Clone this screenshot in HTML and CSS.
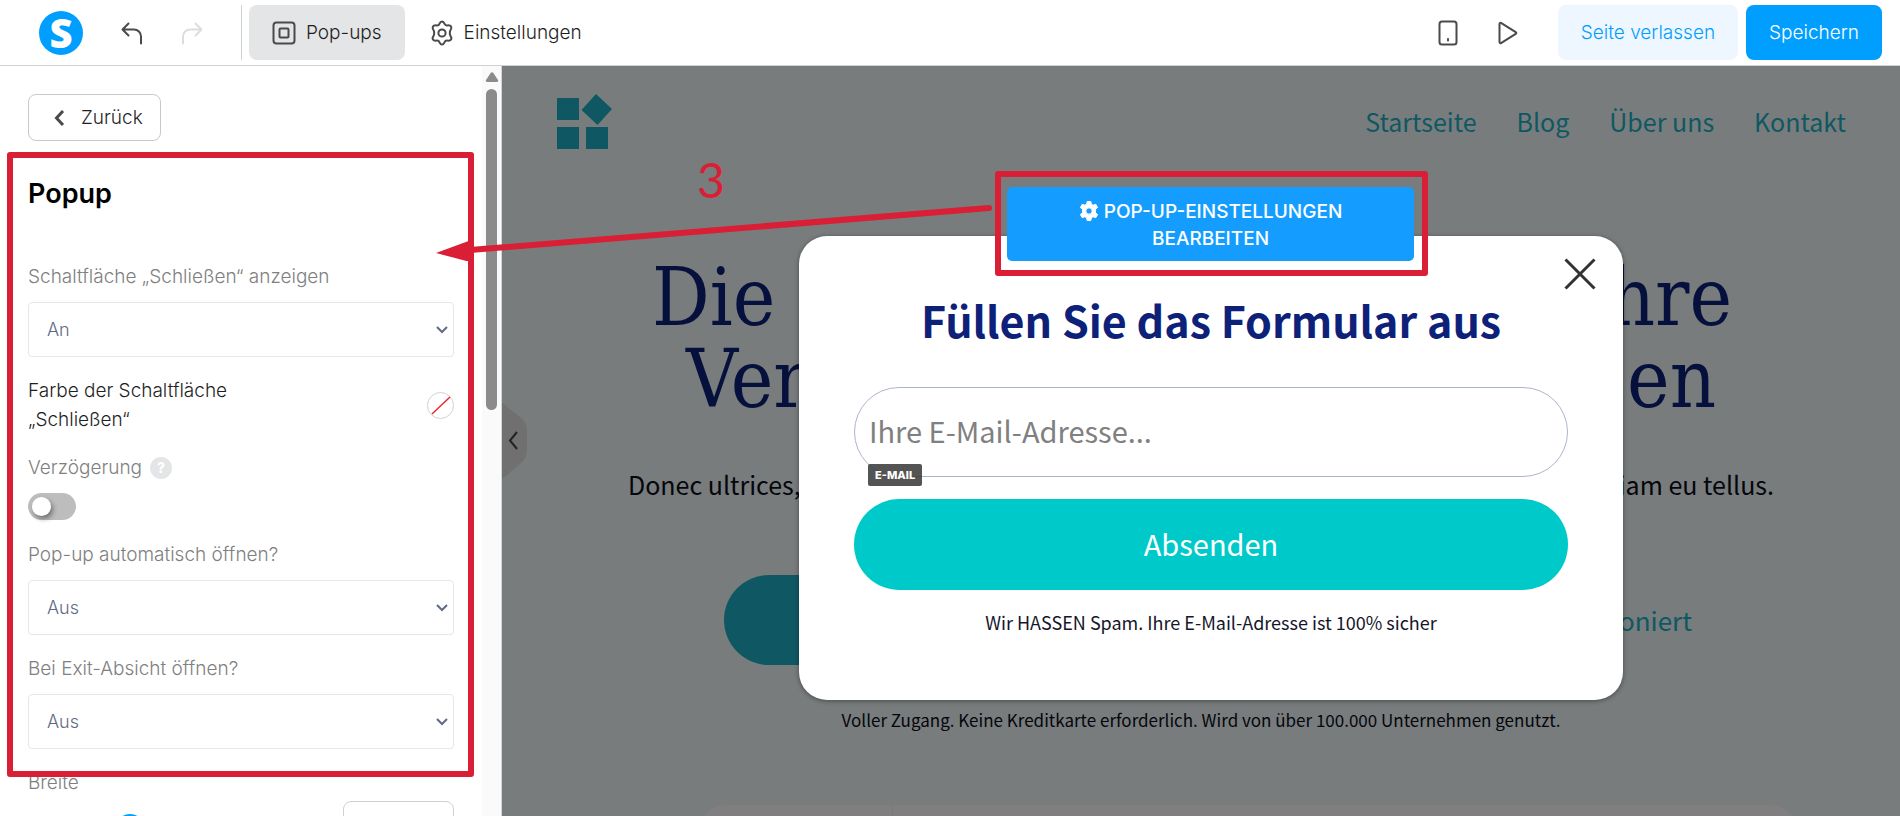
FILE: index.html
```
<!DOCTYPE html>
<html lang="de">
<head>
<meta charset="utf-8">
<meta name="viewport" content="width=device-width, initial-scale=1">
<title>Pop-up Editor</title>
<link rel="stylesheet" href="styles.css">
</head>
<body class="app">
<header class="topbar">
  <div class="topbar-left">
    <span class="brand" aria-label="Logo">S</span>
    <button class="icon-btn" type="button" aria-label="Rückgängig">
      <svg width="22" height="24" viewBox="0 0 22 24"><path d="M7.500 2.500 1.500 8.500l6 6M2 8.500h11a7 7 0 0 1 7 7v7"/></svg>
    </button>
    <button class="icon-btn icon-btn-off" type="button" aria-label="Wiederholen">
      <svg width="22" height="24" viewBox="0 0 22 24"><path d="M14.500 2.500l6 6-6 6M20 8.500H9a7 7 0 0 0-7 7v7"/></svg>
    </button>
  </div>
  <nav class="tabs">
    <button class="tab tab-active" type="button">
      <svg width="24" height="24" viewBox="0 0 24 24"><rect x="1.500" y="1.500" width="21" height="21" rx="3"/><rect x="7.500" y="7.500" width="9" height="9" rx="1"/></svg>
      Pop-ups
    </button>
    <button class="tab" type="button">
      <svg width="24" height="26" viewBox="0 0 24 26"><circle cx="12" cy="13" r="3.600"/><path d="M12 1.500c1.700 0 2 1 2.600 2.400.5 1.200 1.500 1.700 2.800 1.500 1.600-.2 2.800-.3 3.700 1.200.9 1.500.2 2.400-.7 3.700-.8 1.100-.8 4.300 0 5.400.9 1.300 1.600 2.200.7 3.700-.9 1.500-2.100 1.400-3.700 1.200-1.300-.2-2.300.3-2.800 1.500-.6 1.400-.9 2.400-2.600 2.400s-2-1-2.600-2.400c-.5-1.200-1.500-1.700-2.800-1.500-1.600.2-2.800.3-3.700-1.200-.9-1.500-.2-2.400.7-3.700.8-1.100.8-4.300 0-5.400-.9-1.300-1.600-2.200-.7-3.700.9-1.500 2.100-1.400 3.700-1.200 1.300.2 2.300-.3 2.800-1.500C10 2.500 10.300 1.500 12 1.500z"/></svg>
      Einstellungen
    </button>
  </nav>
  <div class="topbar-right">
    <button class="icon-btn" type="button" aria-label="Mobile Ansicht">
      <svg width="20" height="26" viewBox="0 0 20 26"><rect x="1.500" y="1.500" width="17" height="23" rx="2.500"/><path d="M10 19v1.500"/></svg>
    </button>
    <button class="icon-btn" type="button" aria-label="Vorschau">
      <svg width="20" height="24" viewBox="0 0 20 24"><path d="M1.500 3v18c0 1.200 1 1.600 1.900.9l14.300-9c.8-.5.8-1.300 0-1.800l-14.300-9C2.500 1.400 1.500 1.800 1.500 3z"/></svg>
    </button>
    <div class="topbar-actions">
      <button class="btn btn-soft" type="button">Seite verlassen</button>
      <button class="btn btn-solid" type="button">Speichern</button>
    </div>
  </div>
</header>

<div class="workspace">
  <aside class="sidebar">
    <div class="panel">
      <button class="back" type="button">
        <svg width="11" height="18" viewBox="0 0 11 18"><path d="M9 2 2.500 9 9 16"/></svg>
        Zurück
      </button>
      <h2 class="panel-title">Popup</h2>
      <label class="label" for="show-close">Schaltfläche „Schließen“ anzeigen</label>
      <select class="select" id="show-close"><option>An</option><option>Aus</option></select>
      <div class="color-row">
        <span class="color-label">Farbe der Schaltfläche „Schließen“</span>
        <button class="swatch" type="button" aria-label="Farbe wählen">
          <svg width="25" height="25" viewBox="0 0 25 25"><path d="M4 21 22 4"/></svg>
        </button>
      </div>
      <div class="label label-help"><label for="delay">Verzögerung</label><span class="help">?</span></div>
      <input class="toggle" id="delay" type="checkbox">
      <label class="label" for="auto-open">Pop-up automatisch öffnen?</label>
      <select class="select" id="auto-open"><option>Aus</option><option>An</option></select>
      <label class="label" for="exit-open">Bei Exit-Absicht öffnen?</label>
      <select class="select" id="exit-open"><option>Aus</option><option>An</option></select>
      <label class="label label-width" for="width">Breite</label>
      <div class="width-row">
        <input class="range" type="range" min="0" max="100" value="34" aria-label="Breite">
        <input class="number" id="width" type="text">
      </div>
    </div>
    <div class="scrollbar">
      <svg class="scroll-arrow" width="14" height="10" viewBox="0 0 14 10"><path d="M5.800.8 1 8c-.5 1 0 2 1 2h10c1 0 1.500-1 1-2L8.200.8c-.6-.9-1.800-.9-2.400 0z"/></svg>
      <span class="scroll-thumb"></span>
    </div>
    <div class="mark mark-panel"></div>
  </aside>

  <main class="canvas">
    <div class="site">
      <header class="site-header">
        <svg class="site-logo" width="56" height="56" viewBox="0 0 56 56"><path d="M0 4h22v22H0zM0 33h22v22H0zM29 33h22v22H29zM39 0l16 15-14.500 16L24.500 16z"/></svg>
        <nav class="site-nav">
          <a href="#">Startseite</a><a href="#">Blog</a><a href="#">Über uns</a><a href="#">Kontakt</a>
        </nav>
      </header>
      <section class="hero">
        <h1 class="hero-title">
          <span class="hero-line hero-line-a"><span>Die</span><span>Ihre</span></span>
          <span class="hero-line hero-line-b"><span>Ver</span><span>en</span></span>
        </h1>
        <p class="hero-text"><span>Donec ultrices,</span><span>iam eu tellus.</span></p>
        <div class="hero-actions">
          <a class="hero-cta" href="#" aria-label="Start"></a>
          <a class="hero-link" href="#">funktioniert</a>
        </div>
        <p class="hero-note">Voller Zugang. Keine Kreditkarte erforderlich. Wird von über 100.000 Unternehmen genutzt.</p>
      </section>
      <section class="card"><div class="card-side"></div></section>
    </div>

    <button class="handle" type="button" aria-label="Leiste einklappen">
      <svg width="26" height="76" viewBox="0 0 26 76"><path class="handle-bg" d="M0 0 19 15q6 5 6 12v20q0 7-5 12L0 76z"/><path class="handle-icon" d="M15 29 8 37.500 15 46"/></svg>
    </button>

    <div class="popup-layer">
      <form class="popup">
        <button class="close" type="button" aria-label="Schließen">
          <svg width="32" height="32" viewBox="0 0 32 32"><path d="M1.500 1.500l29 29M30.500 1.500l-29 29"/></svg>
        </button>
        <div class="mark mark-edit">
          <button class="edit" type="button">
            <svg class="edit-icon" width="20" height="20" viewBox="0 0 20 20"><path fill-rule="evenodd" d="M8.200.5h3.600l.6 2.700 1.700 1 2.700-.9 1.800 3.200-2.100 1.800v3.400l2.100 1.800-1.800 3.200-2.700-.9-1.700 1-.6 2.700H8.200l-.6-2.700-1.700-1-2.700.9-1.800-3.200 2.100-1.800V8.300L1.400 6.500l1.800-3.200 2.700.9 1.700-1zM10 6.800a3.200 3.200 0 1 0 0 6.400 3.200 3.200 0 0 0 0-6.400z"/></svg>
            POP-UP-EINSTELLUNGEN BEARBEITEN
          </button>
        </div>
        <h2 class="popup-title">Füllen Sie das Formular aus</h2>
        <div class="field">
          <input class="email" type="email" placeholder="Ihre E-Mail-Adresse..." aria-label="E-Mail">
          <span class="tag">E-MAIL</span>
        </div>
        <button class="submit" type="button">Absenden</button>
        <p class="popup-note">Wir HASSEN Spam. Ihre E-Mail-Adresse ist 100% sicher</p>
      </form>
    </div>
  </main>

  <svg class="arrow" width="560" height="60" viewBox="0 0 560 60"><path class="arrow-line" d="M553 7 34 49"/><path class="arrow-head" d="M0 52 38 38v24z"/></svg>
  <span class="step">3</span>
</div>
</body>
</html>
```
FILE: styles.css
```
:root {
  --ink: #4a4a4c;
  --blue: #009fff;
  --red: #d91e36;
  --muted: #808080;
  --site-font: "Noto Sans CJK SC", "Noto Sans", sans-serif;
}

*, *::before, *::after { box-sizing: border-box; }

button, input, select { font: inherit; margin: 0; }
button { cursor: pointer; border: 0; background: none; padding: 0; }
h1, h2, p { margin: 0; }

.app {
  margin: 0;
  height: 100vh;
  overflow: hidden;
  display: flex;
  flex-direction: column;
  background: #fff;
  color: #1f1f1f;
  font-family: Inter, sans-serif;
  font-size: 19px;
  font-weight: 300;
}

/* Top bar */
.topbar {
  flex: none;
  display: flex;
  align-items: center;
  height: 66px;
  padding-right: 18px;
  border-bottom: 1px solid #cfd1d2;
}

.topbar-left {
  display: flex;
  align-items: center;
  gap: 38px;
  padding: 0 38px 0 39px;
}

.brand {
  display: grid;
  place-items: center;
  width: 44px;
  height: 44px;
  border-radius: 50%;
  background: var(--blue);
  color: #fff;
  font: 800 40px/44px "Open Sans", sans-serif;
}

.icon-btn { display: grid; place-items: center; }

.icon-btn svg, .tab svg {
  fill: none;
  stroke: var(--ink);
  stroke-width: 2;
  stroke-linecap: round;
  stroke-linejoin: round;
}

.icon-btn-off svg { stroke: #dcdddf; }

.tabs {
  display: flex;
  gap: 2px;
  padding-left: 7px;
  border-left: 1px solid #cfd1d2;
}

.tab {
  display: flex;
  align-items: center;
  gap: 10px;
  height: 55px;
  padding: 0 23px;
  border-radius: 8px;
  color: #1f1f1f;
}

.tab-active { background: #e4e5e7; }

.topbar-right {
  display: flex;
  align-items: center;
  gap: 40px;
  margin-left: auto;
}

.topbar-actions { display: flex; gap: 8px; }

.btn {
  height: 55px;
  padding: 0 23px;
  border-radius: 8px;
}

.btn-soft { background: #eef6ff; color: var(--blue); }
.btn-solid { background: var(--blue); color: #fff; }

/* Workspace */
.workspace {
  position: relative;
  flex: 1;
  min-height: 0;
  display: flex;
}

.sidebar {
  position: relative;
  flex: none;
  width: 502px;
  display: flex;
  overflow: hidden;
  border-right: 1px solid #d4d6d6;
}

.panel {
  flex: 1;
  padding: 28px 28px 0;
}

.back {
  display: flex;
  align-items: center;
  gap: 16px;
  height: 47px;
  padding: 0 17px 0 25px;
  border: 1px solid #c8c9cc;
  border-radius: 8px;
  color: #1f1f1f;
}

.back svg { fill: none; stroke: var(--ink); stroke-width: 3; }

.panel-title {
  margin: 35px 0 50px;
  color: #000;
  font-size: 27px;
  line-height: 36px;
  font-weight: 600;
}

.label {
  display: block;
  margin-bottom: 10px;
  color: var(--muted);
  line-height: 30px;
}

.select {
  appearance: none;
  display: block;
  width: 100%;
  height: 55px;
  margin-bottom: 19px;
  padding: 0 18px;
  border: 1px solid #e6e7ea;
  border-radius: 4px;
  background: #fff url("data:image/svg+xml,%3Csvg xmlns='http://www.w3.org/2000/svg' width='14' height='10'%3E%3Cpath d='M2 2l5 5 5-5' fill='none' stroke='%235f6b85' stroke-width='2'/%3E%3C/svg%3E") no-repeat right 4px center;
  color: #5f6b85;
  font-size: 18px;
}

.color-row {
  display: flex;
  align-items: center;
  justify-content: space-between;
  margin-bottom: 19px;
}

.color-label { width: 240px; line-height: 29px; }

.swatch {
  display: grid;
  place-items: center;
  width: 27px;
  height: 27px;
  border: 1px solid #d0d1d3;
  border-radius: 50%;
}

.swatch svg { stroke: #f0252f; stroke-width: 1.500; }

.label-help { display: flex; align-items: center; gap: 8px; }

.help {
  width: 22px;
  height: 22px;
  border-radius: 50%;
  background: #e4e5e7;
  color: #fff;
  font-size: 14px;
  line-height: 22px;
  font-weight: 800;
  text-align: center;
}

.toggle {
  appearance: none;
  display: block;
  width: 48px;
  height: 27px;
  margin-bottom: 20px;
  padding: 4px;
  border-radius: 14px;
  background: #bdbdbd;
}

.toggle::before {
  content: "";
  display: block;
  width: 19px;
  height: 19px;
  border-radius: 50%;
  background: #fff;
  box-shadow: 2px 3px 5px rgba(0, 0, 0, .4);
}

.label-width { margin-bottom: 3px; }

.width-row { display: flex; gap: 28px; align-items: center; }

.range {
  appearance: none;
  flex: 1;
  min-width: 0;
  height: 30px;
  background: none;
}

.range::-webkit-slider-thumb {
  appearance: none;
  width: 30px;
  height: 30px;
  border: 2px solid var(--blue);
  border-radius: 50%;
  background: #fff;
}

.number {
  width: 111px;
  height: 55px;
  border: 1px solid #cfd0d3;
  border-radius: 8px;
}

.scrollbar {
  width: 19px;
  padding: 6px 0;
  display: flex;
  flex-direction: column;
  align-items: center;
  gap: 7px;
  background: #fafafa;
}

.scroll-arrow { fill: #8b8b8b; }

.scroll-thumb {
  width: 11px;
  height: 321px;
  border-radius: 6px;
  background: #8b8b8b;
}

/* Site preview */
.canvas {
  position: relative;
  flex: 1;
  min-width: 0;
  overflow: hidden;
  background: #787c7c;
  font-family: var(--site-font);
  font-weight: 400;
}

.site-header {
  display: flex;
  align-items: center;
  justify-content: space-between;
  padding: 28px 54px 0 55px;
}

.site-logo { fill: #0f5863; }

.site-nav { display: flex; gap: 40px; padding-bottom: 2px; }

.site-nav a, .hero-link {
  color: #0f5863;
  font-size: 25px;
  line-height: 36px;
  text-decoration: none;
}

.hero-title {
  margin-top: 107px;
  color: #06103c;
  font: 400 80px/82px "DejaVu Serif Condensed", "DejaVu Serif", serif;
}

.hero-line, .hero-text {
  display: flex;
  justify-content: space-between;
  margin: 0 auto;
}

.hero-line-a { width: 1098px; padding-right: 18px; }
.hero-line-b { width: 1030px; }

.hero-text {
  width: 1146px;
  margin-top: 45px;
  color: #05060d;
  font-size: 25px;
  line-height: 36px;
}

.hero-actions {
  display: flex;
  align-items: center;
  justify-content: space-between;
  width: 982px;
  height: 90px;
  margin: 73px auto 0;
  padding-left: 14px;
}

.hero-cta {
  width: 400px;
  height: 90px;
  border-radius: 45px;
  background: #0f5863;
}

.hero-link { font-size: 26px; }

.hero-note {
  margin-top: 41px;
  color: #05060d;
  font-size: 17px;
  line-height: 28px;
  text-align: center;
}

.card {
  width: 1103px;
  height: 60px;
  margin: 71px 0 0 195px;
  border-radius: 36px;
  background: #807e7e;
}

.card-side {
  width: 196px;
  height: 60px;
  border-right: 1px solid #7a7a7b;
}

.handle {
  position: absolute;
  left: 0;
  top: 337px;
}

.handle svg { display: block; }
.handle-bg { fill: #707070; }
.handle-icon { fill: none; stroke: #222; stroke-width: 2; }

/* Pop-up */
.popup-layer {
  position: absolute;
  inset: 170px 0 auto 20px;
  display: flex;
  justify-content: center;
}

.popup {
  position: relative;
  width: 824px;
  padding: 53px 55px 64px;
  border-radius: 28px;
  background: #fff;
  box-shadow: 0 1px 5px rgba(0, 0, 0, .4);
  text-align: center;
}

.popup-title {
  margin-bottom: 38px;
  color: #0e2178;
  font-size: 43px;
  line-height: 60px;
  font-weight: 700;
}

.field { position: relative; }

.email {
  display: block;
  width: 100%;
  height: 90px;
  padding: 0 14px 4px;
  border: 1px solid #adb5cb;
  border-radius: 45px;
  background: #fff;
  font-size: 29px;
}

.email::placeholder { color: var(--muted); opacity: 1; }

.tag {
  position: absolute;
  left: 14px;
  bottom: -9px;
  padding: 0 7px;
  border-radius: 2px;
  background: rgba(60, 60, 60, .88);
  color: #fff;
  font: 800 11px/22px Inter, sans-serif;
}

.submit {
  display: block;
  width: 100%;
  height: 91px;
  margin: 22px 0 18px;
  padding-bottom: 4px;
  border-radius: 46px;
  background: #00cac9;
  color: #fff;
  font-size: 29px;
}

.popup-note { color: #15162b; font-size: 18px; line-height: 28px; }

.close { position: absolute; top: 22px; right: 27px; }
.close svg { display: block; stroke: #333; stroke-width: 3; }

/* Highlights */
.mark { border: 6px solid var(--red); border-radius: 3px; }

.mark-panel {
  position: absolute;
  inset: 86px 27px 39px 7px;
  pointer-events: none;
}

.mark-edit {
  position: absolute;
  top: -65px;
  left: 196px;
  right: 195px;
  padding: 10px 8px 9px 6px;
}

.edit {
  display: block;
  width: 100%;
  padding: 11px 60px 9px;
  border-radius: 5px;
  background: #149dff;
  color: #fff;
  font: 500 19px/27px Inter, sans-serif;
}

.edit-icon {
  fill: #fff;
  stroke: #fff;
  stroke-width: 1;
  stroke-linejoin: round;
  vertical-align: -3px;
}

.arrow { position: absolute; left: 436px; top: 135px; pointer-events: none; }
.arrow-line { stroke: var(--red); stroke-width: 6; stroke-linecap: round; }
.arrow-head { fill: var(--red); }

.step {
  position: absolute;
  left: 697px;
  top: 84px;
  color: var(--red);
  font: 400 48px/60px Lato, sans-serif;
}
```
